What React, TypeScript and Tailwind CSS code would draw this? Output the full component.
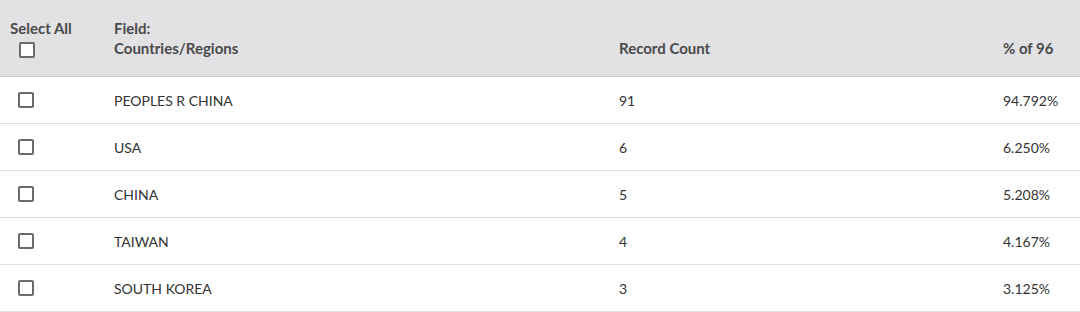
const rows = [
  { name: "PEOPLES R CHINA", count: 91, pct: "94.792%" },
  { name: "USA", count: 6, pct: "6.250%" },
  { name: "CHINA", count: 5, pct: "5.208%" },
  { name: "TAIWAN", count: 4, pct: "4.167%" },
  { name: "SOUTH KOREA", count: 3, pct: "3.125%" },
];

function Checkbox() {
  return (
    <span className="block w-[16px] h-[16px] border-2 border-[#6b6b6b] rounded-[2px] bg-white" />
  );
}

export default function App() {
  return (
    <div
      className="w-[1080px] h-[312px] bg-white text-[14px] text-[#333333]"
      style={{ fontFamily: "Lato, 'Noto Sans', sans-serif" }}
    >
      <div className="grid grid-cols-[114px_505px_384px_1fr] h-[77px] bg-[#e2e2e4] border-b border-[#c8c8ca] text-[15px] font-bold text-[#4a4a4a]">
        <div className="pl-[10px] pt-[18px]">
          <div className="leading-[20px]">Select All</div>
          <div className="pl-[9px] pt-[4px]">
            <Checkbox />
          </div>
        </div>
        <div className="pt-[18px] leading-[20px]">
          <div>Field:</div>
          <div>Countries/Regions</div>
        </div>
        <div className="pt-[38px] leading-[20px]">Record Count</div>
        <div className="pt-[38px] leading-[20px]">% of 96</div>
      </div>
      {rows.map((row, i) => (
        <div
          key={i}
          className="grid grid-cols-[114px_505px_384px_1fr] h-[47px] items-center border-b border-[#dedede]"
        >
          <div className="pl-[18px]">
            <Checkbox />
          </div>
          <div>{row.name}</div>
          <div>{row.count}</div>
          <div>{row.pct}</div>
        </div>
      ))}
    </div>
  );
}
